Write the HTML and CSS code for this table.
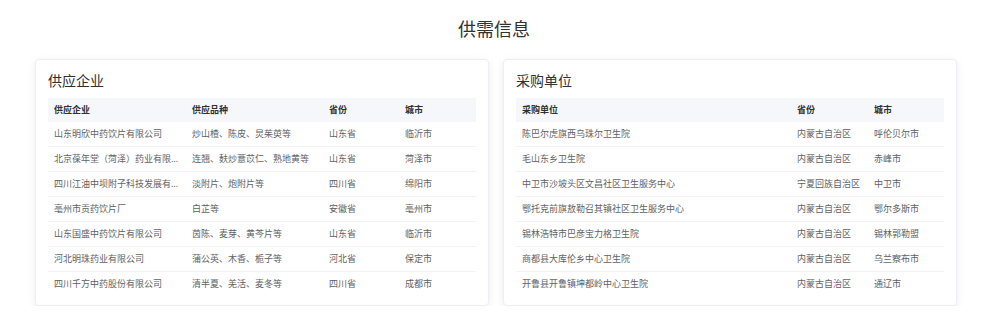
FILE: index.html
```html
<!DOCTYPE html>
<html lang="zh-CN">
<head>
    <meta charset="UTF-8">
    <title>供需信息</title>
    <link rel="stylesheet" href="styles.css">
</head>
<body>
    <div class="page">
        <h1 class="page-title">供需信息</h1>
        <div class="panels">
            <div class="card">
                <h2 class="card-title">供应企业</h2>
                <table class="info-table">
                    <colgroup>
                        <col class="w-138">
                        <col class="w-137">
                        <col class="w-76">
                        <col class="w-77">
                    </colgroup>
                    <thead>
                        <tr><th>供应企业</th><th>供应品种</th><th>省份</th><th>城市</th></tr>
                    </thead>
                    <tbody>
                        <tr><td>山东明欣中药饮片有限公司</td><td>炒山楂、陈皮、炅茱萸等</td><td>山东省</td><td>临沂市</td></tr>
                        <tr><td>北京葆年堂（菏泽）药业有限公司</td><td>连翘、麸炒薏苡仁、熟地黄等</td><td>山东省</td><td>菏泽市</td></tr>
                        <tr><td>四川江油中坝附子科技发展有限公司</td><td>淡附片、炮附片等</td><td>四川省</td><td>绵阳市</td></tr>
                        <tr><td>亳州市贡药饮片厂</td><td>白芷等</td><td>安徽省</td><td>亳州市</td></tr>
                        <tr><td>山东国盛中药饮片有限公司</td><td>茵陈、麦芽、黄芩片等</td><td>山东省</td><td>临沂市</td></tr>
                        <tr><td>河北明珠药业有限公司</td><td>蒲公英、木香、栀子等</td><td>河北省</td><td>保定市</td></tr>
                        <tr><td>四川千方中药股份有限公司</td><td>清半夏、羌活、麦冬等</td><td>四川省</td><td>成都市</td></tr>
                    </tbody>
                </table>
            </div>
            <div class="card">
                <h2 class="card-title">采购单位</h2>
                <table class="info-table">
                    <colgroup>
                        <col class="w-275">
                        <col class="w-77">
                        <col class="w-76">
                    </colgroup>
                    <thead>
                        <tr><th>采购单位</th><th>省份</th><th>城市</th></tr>
                    </thead>
                    <tbody>
                        <tr><td>陈巴尔虎旗西乌珠尔卫生院</td><td>内蒙古自治区</td><td>呼伦贝尔市</td></tr>
                        <tr><td>毛山东乡卫生院</td><td>内蒙古自治区</td><td>赤峰市</td></tr>
                        <tr><td>中卫市沙坡头区文昌社区卫生服务中心</td><td>宁夏回族自治区</td><td>中卫市</td></tr>
                        <tr><td>鄂托克前旗敖勒召其镇社区卫生服务中心</td><td>内蒙古自治区</td><td>鄂尔多斯市</td></tr>
                        <tr><td>锡林浩特市巴彦宝力格卫生院</td><td>内蒙古自治区</td><td>锡林郭勒盟</td></tr>
                        <tr><td>商都县大库伦乡中心卫生院</td><td>内蒙古自治区</td><td>乌兰察布市</td></tr>
                        <tr><td>开鲁县开鲁镇坤都岭中心卫生院</td><td>内蒙古自治区</td><td>通辽市</td></tr>
                    </tbody>
                </table>
            </div>
        </div>
    </div>
</body>
</html>
```

FILE: styles.css
```css
/* Base */
body {
    margin: 0;
    background: #ffffff;
    color: #303133;
    font-family: "Noto Sans CJK SC", "Noto Sans", sans-serif;
}

.page {
    margin: 0 47px 0 35px;
    padding-top: 16px;
}

.page-title {
    margin: 0 0 19px;
    font-size: 18px;
    line-height: 24px;
    font-weight: normal;
    text-align: center;
    color: #303133;
}

/* Two cards side by side */
.panels {
    display: grid;
    grid-template-columns: 1fr 1fr;
    gap: 14px;
}

.card {
    background: #fff;
    border: 1px solid #ebeef5;
    border-radius: 4px;
    padding: 10px 12px 9px;
    box-shadow: 0 2px 9px rgba(0, 0, 0, 0.08);
}

.card-title {
    margin: 0 0 8px;
    font-size: 14px;
    line-height: 20px;
    font-weight: normal;
    color: #303133;
}

/* Tables */
.info-table {
    width: 100%;
    table-layout: fixed;
    border-collapse: separate;
    border-spacing: 0;
    font-size: 9px;
    /* latin font first so the ellipsis sits on the baseline */
    font-family: "Noto Sans", "Noto Sans CJK SC", sans-serif;
}

.info-table th,
.info-table td {
    padding: 0 6px;
    line-height: 24px;
    text-align: left;
    white-space: nowrap;
    overflow: hidden;
    text-overflow: ellipsis;
}

.info-table th {
    background: #f5f7fa;
    color: #303133;
    font-weight: bold;
}

.info-table td {
    color: #606266;
    border-bottom: 1px solid #f0f2f5;
}

.info-table tbody tr:last-child td {
    border-bottom: none;
}

.w-275 { width: 275px; }
.w-138 { width: 138px; }
.w-137 { width: 137px; }
.w-77 { width: 77px; }
.w-76 { width: 76px; }
```
